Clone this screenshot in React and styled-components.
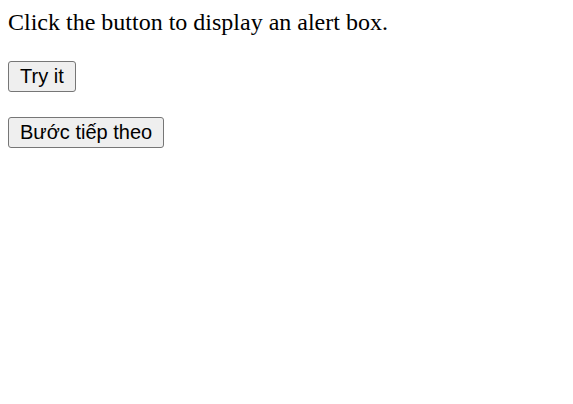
import React from "react";
import styled, { createGlobalStyle } from "styled-components";

const Global = createGlobalStyle`
  html, body { margin: 0; padding: 0; background: #ffffff; }
  body { padding: 8px; font-family: "Liberation Serif", "Times New Roman", serif; color: #000; }
`;

const Page = styled.main`
  display: flex;
  flex-direction: column;
  align-items: flex-start;
  gap: 25px;
`;

const Text = styled.p`
  margin: 0;
  font-family: "Liberation Serif", "Times New Roman", serif;
  font-size: 24px;
  line-height: 28px;
  color: #000;
`;

const Button = styled.button`
  margin: 0;
  font-family: "Liberation Sans", Arial, sans-serif;
  font-size: 20px;
  line-height: 23px;
  color: #000;
  background: #efefef;
  border: 1px solid #767676;
  border-radius: 3px;
  padding: 3px 11px;
  cursor: pointer;
  &:hover { background: #e5e5e5; }
`;

export default function App() {
  return (
    <>
      <Global />
      <Page>
        <Text>Click the button to display an alert box.</Text>
        <Button onClick={() => alert("Hello! I am an alert box!")}>Try it</Button>
        <Button>Bước tiếp theo</Button>
      </Page>
    </>
  );
}
